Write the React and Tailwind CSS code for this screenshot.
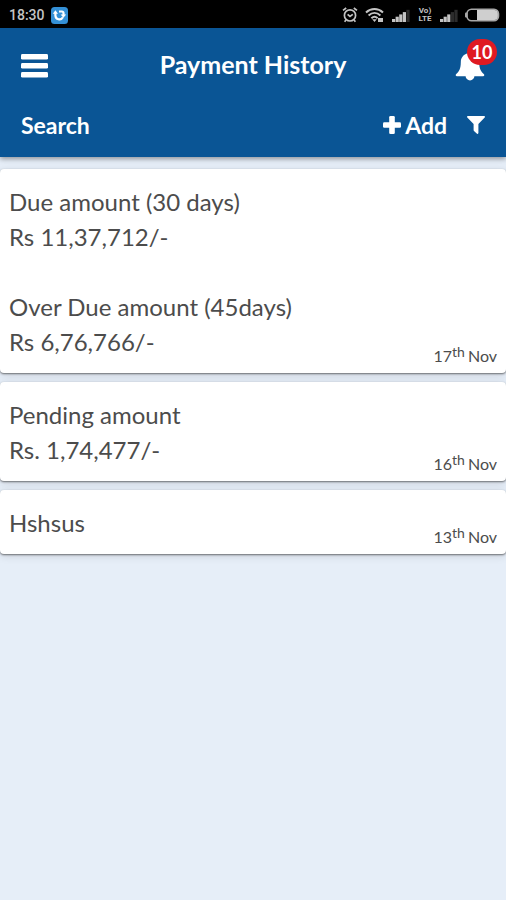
import React, { useState } from 'react';

const payments = [
  {
    id: 1,
    lines: ['Due amount (30 days)', 'Rs 11,37,712/-', '', 'Over Due amount (45days)', 'Rs 6,76,766/-'],
    day: 17,
    month: 'Nov',
  },
  { id: 2, lines: ['Pending amount', 'Rs. 1,74,477/-'], day: 16, month: 'Nov' },
  { id: 3, lines: ['Hshsus'], day: 13, month: 'Nov' },
];

function AlarmIcon() {
  return (
    <svg className="h-4 w-4" viewBox="0 0 16 16" fill="none" stroke="#c4c4c4" strokeWidth="1.7">
      <circle cx="8" cy="8.4" r="5.6" />
      <path d="M5.6 7.4L8 9.4l2.8-2M1 3.4L4.2 1M15 3.4L11.8 1M4 13l-1.4 1.8M12 13l1.4 1.8" />
    </svg>
  );
}

function WifiIcon() {
  return (
    <svg className="h-4 w-5" viewBox="0 0 20 16" fill="none" stroke="#c4c4c4" strokeWidth="2">
      <path d="M1 5.4c5-4.6 12-4.6 17 0M3.6 8.4c3.6-3.2 8.2-3.2 11.8 0M6.4 11.2c2-1.8 4.4-1.8 6.2 0" />
      <path d="M7.2 12.2h4.6L9.5 15zM13 11h5v4h-5z" fill="#c4c4c4" stroke="none" />
    </svg>
  );
}

function SignalIcon({ level }) {
  return (
    <svg className="h-4 w-[18px]" viewBox="0 0 18 16">
      {[0, 1, 2, 3, 4].map((i) => (
        <rect key={i} x={i * 3.6} y={12 - i * 2.3} width="3.2" height={3 + i * 2.3} fill={i < level ? '#c4c4c4' : '#2c2c2c'} />
      ))}
    </svg>
  );
}

function BatteryIcon() {
  return (
    <svg className="h-3.5 w-[35px]" viewBox="0 0 35 14">
      <rect x="2" y="1.2" width="31.5" height="11.6" rx="4.5" fill="#000" stroke="#a8a8a8" strokeWidth="1.6" />
      <path d="M12 2h17.5a3.4 3.4 0 0 1 3.4 3.4v3.2a3.4 3.4 0 0 1-3.4 3.4H12z" fill="#cfcfcf" />
      <rect x="0" y="4.5" width="2.5" height="5" rx="1" fill="#a8a8a8" />
    </svg>
  );
}

function MenuIcon() {
  return (
    <svg className="h-6 w-7" viewBox="0 0 28 24" fill="currentColor">
      <rect y="0" width="27" height="5.6" rx="1.4" />
      <rect y="9" width="27" height="5.6" rx="1.4" />
      <rect y="18" width="27" height="5.6" rx="1.4" />
    </svg>
  );
}

function BellIcon() {
  return (
    <svg className="h-[30px] w-[30px]" viewBox="0 0 30 30" fill="currentColor">
      <path d="M15 0c1.4 0 2.1.9 2 2.2 4.6 1 7.2 4.5 7.2 9 0 6.4 1.8 9.4 4.8 12 .7.8.2 2-.9 2H1.9c-1.1 0-1.6-1.2-.9-2 3-2.6 4.8-5.6 4.8-12 0-4.5 2.6-8 7.2-9C12.9.9 13.6 0 15 0z" />
      <path d="M10.6 25h8.8a4.4 4.4 0 0 1-8.8 0z" />
    </svg>
  );
}

function PlusIcon() {
  return (
    <svg className="h-[18px] w-[18px]" viewBox="0 0 18 18" fill="currentColor">
      <rect x="6.2" width="5.6" height="18" rx="1.3" />
      <rect y="6.2" width="18" height="5.6" rx="1.3" />
    </svg>
  );
}

function FilterIcon() {
  return (
    <svg className="h-[18px] w-[18px]" viewBox="0 0 18 18" fill="currentColor">
      <path d="M.9 0h16.2c.9 0 1.2 1 .6 1.6L11.4 8v9.1c0 .8-.8 1.1-1.4.6l-3-2.7a1.5 1.5 0 0 1-.4-1.1V8L.3 1.6C-.3 1 0 0 .9 0z" />
    </svg>
  );
}

function StatusBar() {
  return (
    <div className="flex h-7 items-center bg-black pr-1.5 pl-[9px] pt-0.5 font-[Roboto,sans-serif] text-[#c4c4c4]">
      <span className="text-sm font-medium">18:30</span>
      <svg className="ml-1.5 h-[17px] w-[17px]" viewBox="0 0 17 17">
        <rect width="17" height="17" rx="3.5" fill="#3490d6" />
        <path d="M4.4 6v2.5a4 4 0 0 0 7.5 1.8M8 4.5h3a1.5 1.5 0 0 1 1.5 1.5v2" fill="none" stroke="#fff" strokeWidth="2.2" />
        <path d="M1.8 6.8L4.4 3.2 7 6.8zM9.6 7.4h5.6l-2.8 3.4z" fill="#fff" />
      </svg>
      <div className="ml-auto flex items-center gap-[7px]">
        <AlarmIcon />
        <WifiIcon />
        <SignalIcon level={4} />
        <div className="flex w-4 flex-col items-center text-[8px] leading-[8px] font-bold">
          <span className="h-2">Vo)</span>
          <span className="h-2">LTE</span>
        </div>
        <SignalIcon level={3} />
        <BatteryIcon />
      </div>
    </div>
  );
}

function PaymentCard({ payment }) {
  return (
    <li className="relative rounded-sm bg-white px-[9px] pt-[15px] pb-3.5 shadow-[0_1px_2px_#00000080,0_2px_8px_#00000020]">
      {payment.lines.map((line, i) => (
        <p key={i} className="h-[35px] text-2xl leading-[35px]">{line}</p>
      ))}
      <time className="absolute right-[9px] bottom-[7px] flex text-base leading-5">
        {payment.day}
        <sup className="top-0 mr-[3px] -mt-1 text-sm leading-5">th</sup>
        {payment.month}
      </time>
    </li>
  );
}

export default function App() {
  const [search, setSearch] = useState('');
  const visible = payments.filter((p) => p.lines.join(' ').toLowerCase().includes(search.toLowerCase()));

  return (
    <div className="min-h-screen bg-[#e6eef8] font-[Lato,sans-serif] text-[#4c4c4c]">
      <StatusBar />
      <header className="bg-[#0a5595] pb-1.5 text-white shadow-[0_2px_5px_#00000060]">
        <div className="flex h-[71px] items-center justify-between px-[21px]">
          <button type="button" aria-label="Menu" className="w-8 pt-1">
            <MenuIcon />
          </button>
          <h1 className="text-[25px] leading-8 font-bold">Payment History</h1>
          <button type="button" aria-label="Notifications" className="relative flex w-8 justify-end pt-1">
            <BellIcon />
            <span className="absolute -top-2 -right-3 flex h-[26px] w-[30px] items-center justify-center rounded-full bg-[#df1a22] text-lg font-bold">
              10
            </span>
          </button>
        </div>
        <div className="flex h-[52px] items-center px-[21px]">
          <input
            type="text"
            aria-label="Search"
            placeholder="Search"
            value={search}
            onChange={(e) => setSearch(e.target.value)}
            className="min-w-0 flex-1 bg-transparent text-[23px] font-bold outline-none placeholder:text-white"
          />
          <button type="button" className="flex items-center gap-1 text-[23px] font-bold">
            <PlusIcon />
            Add
          </button>
          <button type="button" aria-label="Filter" className="ml-5">
            <FilterIcon />
          </button>
        </div>
      </header>
      <ul className="mt-3 flex flex-col gap-[9px]">
        {visible.map((p) => (
          <PaymentCard key={p.id} payment={p} />
        ))}
      </ul>
    </div>
  );
}
